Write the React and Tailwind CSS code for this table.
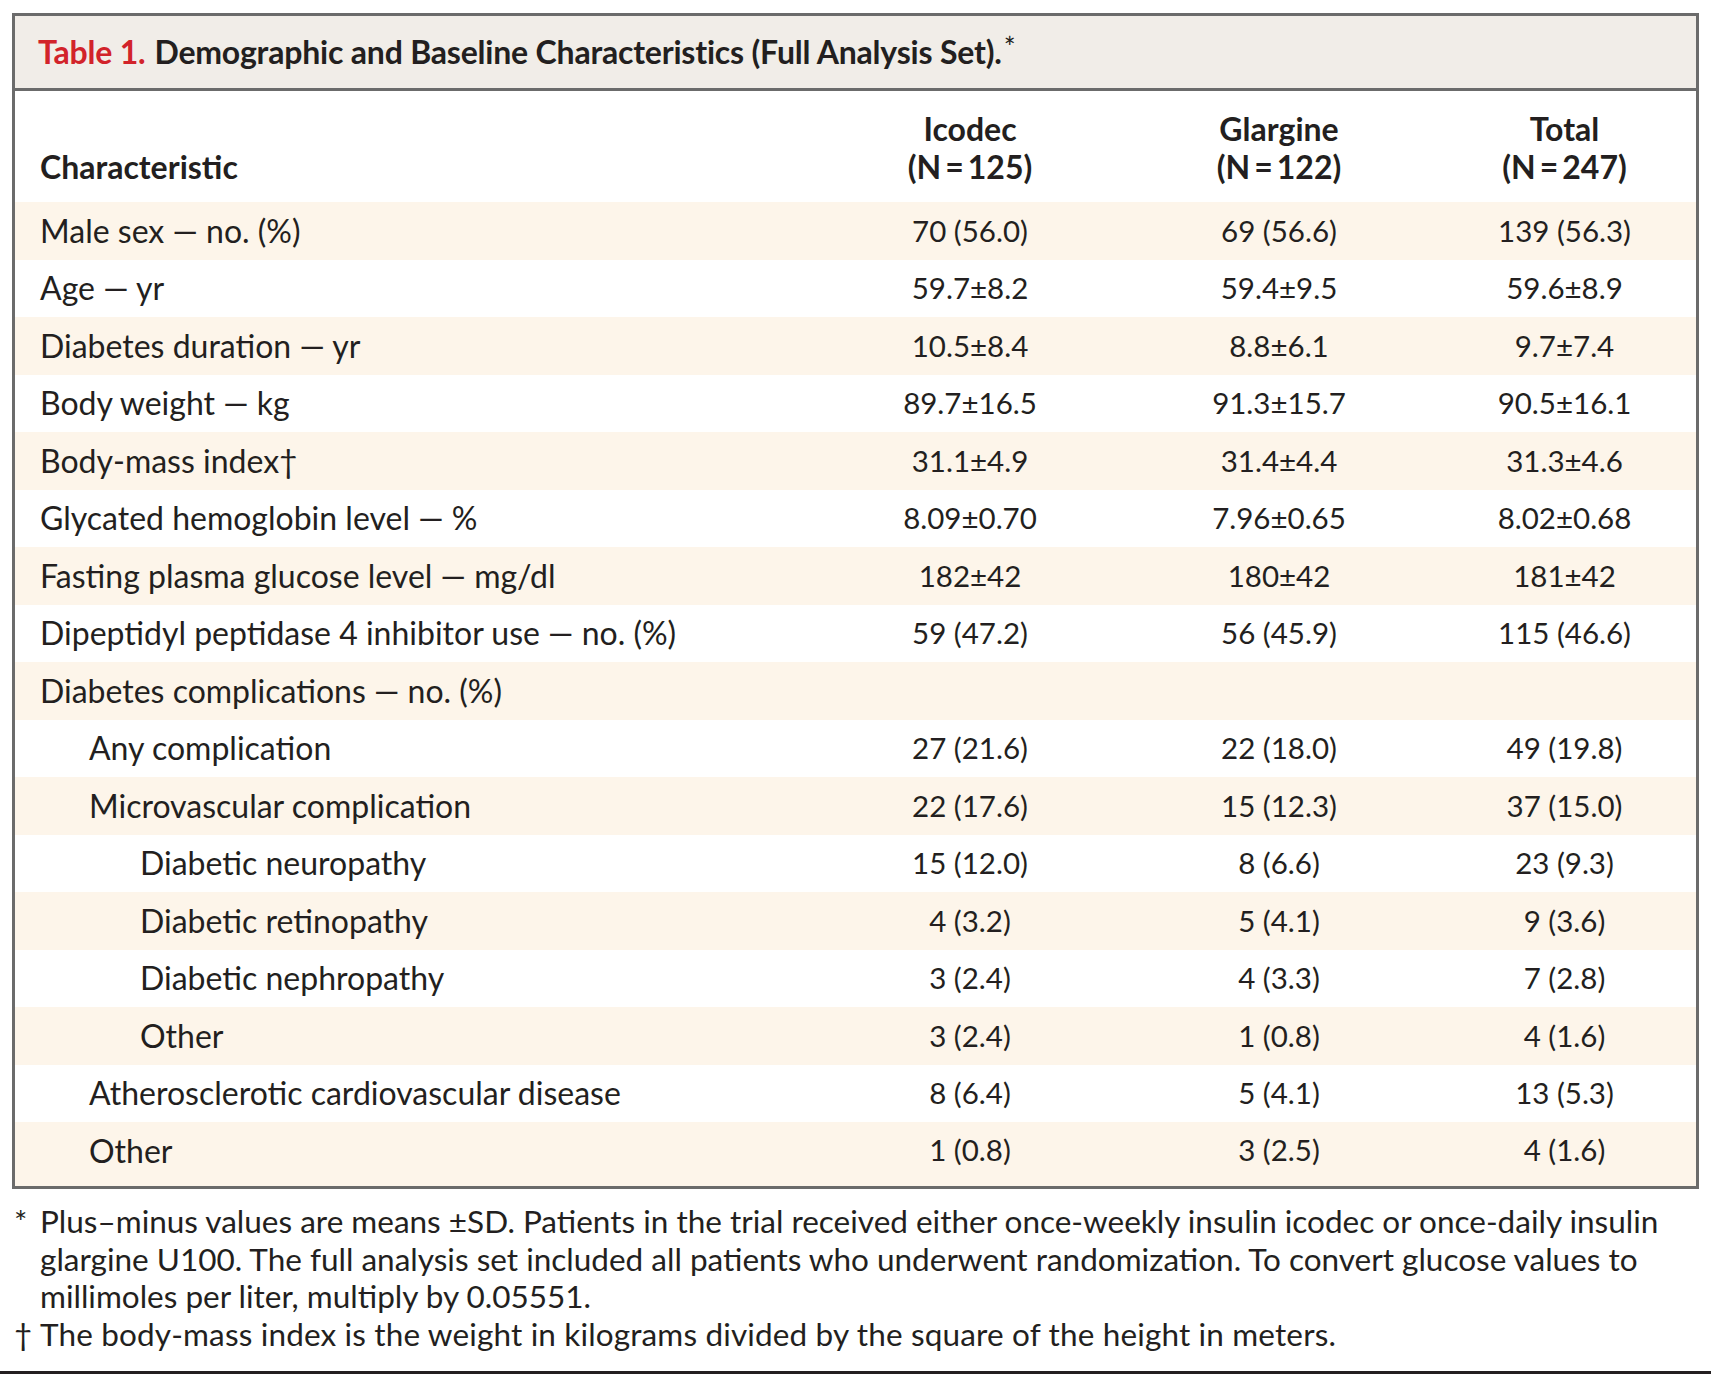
import React from "react";

const rows = [
  { label: "Male sex — no. (%)", level: 0, vals: ["70 (56.0)", "69 (56.6)", "139 (56.3)"] },
  { label: "Age — yr", level: 0, vals: ["59.7±8.2", "59.4±9.5", "59.6±8.9"] },
  { label: "Diabetes duration — yr", level: 0, vals: ["10.5±8.4", "8.8±6.1", "9.7±7.4"] },
  { label: "Body weight — kg", level: 0, vals: ["89.7±16.5", "91.3±15.7", "90.5±16.1"] },
  { label: "Body-mass index", dagger: true, level: 0, vals: ["31.1±4.9", "31.4±4.4", "31.3±4.6"] },
  { label: "Glycated hemoglobin level — %", level: 0, vals: ["8.09±0.70", "7.96±0.65", "8.02±0.68"] },
  { label: "Fasting plasma glucose level — mg/dl", level: 0, vals: ["182±42", "180±42", "181±42"] },
  { label: "Dipeptidyl peptidase 4 inhibitor use — no. (%)", level: 0, vals: ["59 (47.2)", "56 (45.9)", "115 (46.6)"] },
  { label: "Diabetes complications — no. (%)", level: 0, vals: ["", "", ""] },
  { label: "Any complication", level: 1, vals: ["27 (21.6)", "22 (18.0)", "49 (19.8)"] },
  { label: "Microvascular complication", level: 1, vals: ["22 (17.6)", "15 (12.3)", "37 (15.0)"] },
  { label: "Diabetic neuropathy", level: 2, vals: ["15 (12.0)", "8 (6.6)", "23 (9.3)"] },
  { label: "Diabetic retinopathy", level: 2, vals: ["4 (3.2)", "5 (4.1)", "9 (3.6)"] },
  { label: "Diabetic nephropathy", level: 2, vals: ["3 (2.4)", "4 (3.3)", "7 (2.8)"] },
  { label: "Other", level: 2, vals: ["3 (2.4)", "1 (0.8)", "4 (1.6)"] },
  { label: "Atherosclerotic cardiovascular disease", level: 1, vals: ["8 (6.4)", "5 (4.1)", "13 (5.3)"] },
  { label: "Other", level: 1, vals: ["1 (0.8)", "3 (2.5)", "4 (1.6)"] },
];

const indent = ["pl-[25px]", "pl-[74px]", "pl-[125px]"];

export default function App() {
  return (
    <div className="w-[1711px] h-[1386px] bg-white text-[#231f20] font-['Lato',sans-serif]">
      <div className="pt-[13px] pl-[12px] w-[1699px]">
        {/* TABLE BOX */}
        <div className="border-[3px] border-[#6b6b6b]">
          <div className="h-[75px] bg-[#f1ede8] border-b-[3px] border-[#6b6b6b] flex items-center pl-[23px] text-[32px] font-bold tracking-[-0.2px]">
            <span className="text-[#d2232a]">Table 1.</span>
            <span className="ml-[9px]">Demographic and Baseline Characteristics (Full Analysis Set).</span>
            <span className="text-[28px] font-normal self-start mt-[10px] ml-[2px]">*</span>
          </div>

          {/* COLUMN HEADERS */}
          <div className="grid grid-cols-[800px_310px_308px_1fr] h-[111px] items-end pb-[16px] text-[32px] font-bold leading-[38px]">
            <div className="pl-[25px]">Characteristic</div>
            <div className="text-center">Icodec<br />(N{"\u2009=\u2009"}125)</div>
            <div className="text-center">Glargine<br />(N{"\u2009=\u2009"}122)</div>
            <div className="text-center">Total<br />(N{"\u2009=\u2009"}247)</div>
          </div>

          {/* ROWS */}
          {rows.map((r, i) => (
            <div
              key={i}
              className={`grid grid-cols-[800px_310px_308px_1fr] items-center ${
                i === rows.length - 1 ? "h-[64px] pb-[7px]" : "h-[57.5px]"
              } ${i % 2 === 0 ? "bg-[#fdf5ea]" : "bg-white"}`}
            >
              <div className={`${indent[r.level]} text-[32px]`}>
                {r.label}
                {r.dagger && <span>†</span>}
              </div>
              {r.vals.map((v, j) => (
                <div key={j} className="text-center text-[29.5px]">{v}</div>
              ))}
            </div>
          ))}
        </div>

        {/* FOOTNOTES */}
        <div className="pt-[14px] text-[31.5px] leading-[37.5px]">
          <div className="flex">
            <span className="w-[28px] shrink-0 pl-[2px]">*</span>
            <p>
              Plus–minus values are means ±SD. Patients in the trial received either once-weekly insulin icodec or once-daily insulin glargine U100. The full analysis set included all patients who underwent randomization. To convert glucose values to millimoles per liter, multiply by 0.05551.
            </p>
          </div>
          <div className="flex">
            <span className="w-[28px] shrink-0 pl-[2px]">†</span>
            <p className="tracking-[0.15px]">The body-mass index is the weight in kilograms divided by the square of the height in meters.</p>
          </div>
        </div>
        <div className="mt-[18px] h-[3px] bg-[#231f20] -ml-[12px] w-[1711px]"></div>
      </div>
    </div>
  );
}
